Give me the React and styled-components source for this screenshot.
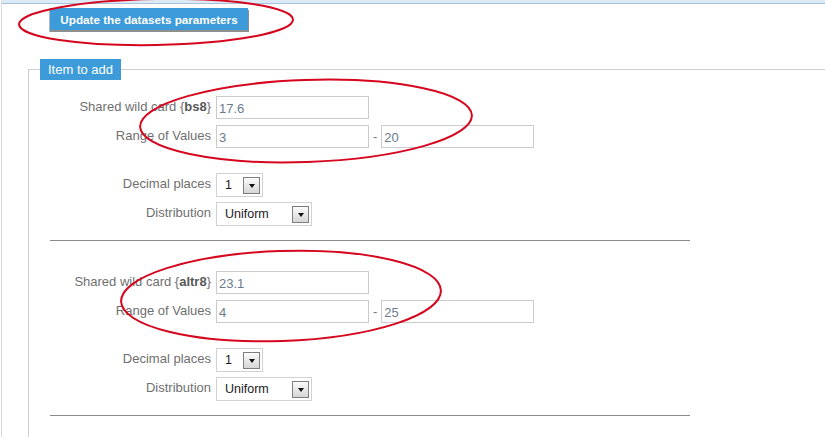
import styled, { createGlobalStyle } from "styled-components";

const GlobalStyle = createGlobalStyle`
  html, body {
    margin: 0;
    padding: 0;
    background: #fff;
    overflow: hidden;
  }
  body {
    font-family: "Liberation Sans", Arial, sans-serif;
  }
`;

const sections = [
  { code: "bs8", value: "17.6", min: "3", max: "20", decimals: "1", dist: "Uniform" },
  { code: "altr8", value: "23.1", min: "4", max: "25", decimals: "1", dist: "Uniform" },
];

const Page = styled.div`
  position: relative;
  width: 824px;
  height: 437px;
  margin-left: 1px;
  border-left: 1px solid #dcdcdc;
  overflow: hidden;
`;

const TopStrip = styled.div`
  height: 3px;
  background: #dce9f6;
  border-bottom: 1px solid #a6c2dc;
`;

const ButtonRow = styled.div`
  padding: 4px 0 0 48px;
  height: 28px;
`;

const UpdateButton = styled.button`
  width: 198px;
  height: 22px;
  border: 0;
  padding: 0;
  background: #3d9bda;
  color: #fff;
  font-family: "Liberation Sans", Arial, sans-serif;
  font-size: 11.7px;
  font-weight: bold;
  box-shadow: 0 2px 0 #8e8e8e, 1px 2px 0 #8e8e8e, -1px 2px 0 #b5b5b5;
  cursor: pointer;
`;

const Fieldset = styled.fieldset`
  margin: 23px 0 0 26px;
  padding: 0 0 60px;
  width: 830px;
  min-width: 0;
  border: 1px solid #cfcfcf;
  border-right: 0;
`;

const Legend = styled.legend`
  margin-left: 11px;
  padding: 0 8px;
  height: 21px;
  line-height: 21px;
  background: #3d9bda;
  color: #fff;
  font-size: 13px;
`;

const Section = styled.div`
  padding-top: ${(p) => (p.first ? "16px" : "30px")};
`;

const Group = styled.div`
  display: flex;
  flex-direction: column;
  gap: ${(p) => p.gap}px;
  margin-top: ${(p) => p.top || 0}px;
`;

const Row = styled.div`
  display: flex;
  align-items: center;
`;

const Label = styled.div`
  width: 182px;
  padding-right: 5px;
  text-align: right;
  font-size: 13px;
  color: #6f6f6f;
  margin-top: -3px;

  b {
    color: #585858;
  }
`;

const TextInput = styled.div`
  box-sizing: border-box;
  width: 153px;
  height: 23px;
  padding: 2px 2px 0;
  border: 1px solid #cbcbcb;
  font-size: 13px;
  line-height: 19px;
  color: #6b7b8c;
`;

const Dash = styled.span`
  margin: 0 4px;
  font-size: 13px;
  color: #777;
`;

const SelectBox = styled.div`
  box-sizing: border-box;
  width: ${(p) => p.width}px;
  height: 24px;
  padding: 0 2px 0 8px;
  border: 1px solid #d2d2d2;
  display: flex;
  align-items: center;
  justify-content: space-between;
  font-size: 12.5px;
  color: #1a1a1a;
`;

const ArrowButton = styled.span`
  box-sizing: border-box;
  width: 17px;
  height: 17px;
  border: 1px solid #7e7e7e;
  background: linear-gradient(#fbfbfb, #d6d6d6);
  display: flex;
  align-items: center;
  justify-content: center;

  &::after {
    content: "";
    border-left: 3.5px solid transparent;
    border-right: 3.5px solid transparent;
    border-top: 4px solid #111;
    margin-top: 1px;
  }
`;

const Divider = styled.div`
  width: 640px;
  height: 1px;
  margin: 14px 0 0 21px;
  background: #8a8a8a;
`;

const Marks = styled.svg`
  position: absolute;
  left: -2px;
  top: 0;
  pointer-events: none;
`;

const Select = ({ value, width }) => (
  <SelectBox width={width}>
    <span>{value}</span>
    <ArrowButton />
  </SelectBox>
);

const ItemSection = ({ item, first }) => (
  <Section first={first}>
    <Group gap={6}>
      <Row>
        <Label>
          Shared wild card {"{"}
          <b>{item.code}</b>
          {"}"}
        </Label>
        <TextInput>{item.value}</TextInput>
      </Row>
      <Row>
        <Label>Range of Values</Label>
        <TextInput>{item.min}</TextInput>
        <Dash>-</Dash>
        <TextInput>{item.max}</TextInput>
      </Row>
    </Group>
    <Group gap={5} top={25}>
      <Row>
        <Label>Decimal places</Label>
        <Select value={item.decimals} width={47} />
      </Row>
      <Row>
        <Label>Distribution</Label>
        <Select value={item.dist} width={96} />
      </Row>
    </Group>
    <Divider />
  </Section>
);

export default function App() {
  return (
    <>
      <GlobalStyle />
      <Page>
        <TopStrip />
        <ButtonRow>
          <UpdateButton>Update the datasets parameters</UpdateButton>
        </ButtonRow>
        <Fieldset>
          <Legend>Item to add</Legend>
          {sections.map((item, i) => (
            <ItemSection key={item.code} item={item} first={i === 0} />
          ))}
        </Fieldset>
        <Marks width="827" height="437" viewBox="0 0 827 437">
          <g fill="none" stroke="#d5061e" strokeWidth="2">
            <ellipse cx="156" cy="22" rx="137" ry="23" transform="rotate(-1 156 22)" />
            <ellipse cx="306" cy="121" rx="166" ry="41" transform="rotate(-2 306 121)" />
            <ellipse cx="281" cy="296" rx="160" ry="45" transform="rotate(-2 281 296)" />
          </g>
        </Marks>
      </Page>
    </>
  );
}
